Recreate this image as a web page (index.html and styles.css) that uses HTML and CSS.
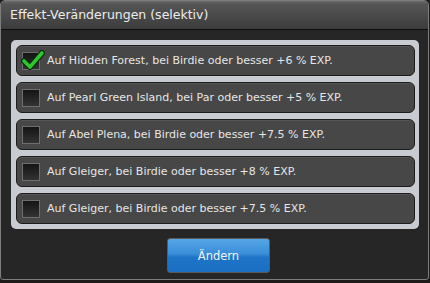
FILE: index.html
```html
<!DOCTYPE html>
<html>
<head>
<meta charset="utf-8">
<link rel="stylesheet" href="styles.css">
</head>
<body>
<div class="dialog">
  <div class="titlebar">Effekt-Veränderungen (selektiv)</div>
  <div class="content">
    <div class="panel">
      <div class="row">
        <span class="box checked">
          <svg class="check" width="24" height="24" viewBox="0 0 24 24">
            <path d="M3 13 L9 19 L21 5" fill="none" stroke="#0b2a0b" stroke-width="6" stroke-linecap="round" stroke-linejoin="round"/>
            <path d="M3 13 L9 19 L21 5" fill="none" stroke="#2fc52f" stroke-width="3.6" stroke-linecap="round" stroke-linejoin="round"/>
          </svg>
        </span>
        <span class="label">Auf Hidden Forest, bei Birdie oder besser +6 % EXP.</span>
      </div>
      <div class="row">
        <span class="box"></span>
        <span class="label">Auf Pearl Green Island, bei Par oder besser +5 % EXP.</span>
      </div>
      <div class="row">
        <span class="box"></span>
        <span class="label">Auf Abel Plena, bei Birdie oder besser +7.5 % EXP.</span>
      </div>
      <div class="row">
        <span class="box"></span>
        <span class="label">Auf Gleiger, bei Birdie oder besser +8 % EXP.</span>
      </div>
      <div class="row">
        <span class="box"></span>
        <span class="label">Auf Gleiger, bei Birdie oder besser +7.5 % EXP.</span>
      </div>
    </div>
    <div class="actions">
      <button class="btn">Ändern</button>
    </div>
  </div>
</div>
</body>
</html>
```
FILE: styles.css
```css
html, body {
  margin: 0;
  padding: 0;
  background: #1e1b1a;
  width: 430px;
  height: 283px;
  overflow: hidden;
}
.dialog {
  box-sizing: border-box;
  width: 429px;
  height: 280px;
  border: 1px solid #7d7d7d;
  border-radius: 5px 5px 3px 3px;
  background: #262626;
  font-family: "DejaVu Sans", sans-serif;
  display: flex;
  flex-direction: column;
  overflow: hidden;
}
.titlebar {
  height: 28px;
  border-bottom: 1px solid #0e0e0e;
  background: linear-gradient(#6c6c6c 0px, #555 3px, #4a4a4a 14px, #3c3c3c 28px);
  color: #ececec;
  font-size: 12.5px;
  line-height: 28px;
  padding-left: 9px;
}
.content {
  display: flex;
  flex-direction: column;
  padding: 10px 0 0 10px;
}
.panel {
  box-sizing: border-box;
  width: 408px;
  background: #c8ccd2;
  border-radius: 5px;
  padding: 5px 4px 5px 5px;
  display: flex;
  flex-direction: column;
  gap: 6px;
}
.row {
  box-sizing: border-box;
  height: 31px;
  background: #474747;
  border: 1px solid #1c1c1c;
  border-radius: 6px;
  display: flex;
  align-items: center;
  padding-left: 5px;
  box-shadow: inset 0 1px 0 #555;
}
.box {
  position: relative;
  box-sizing: border-box;
  width: 18px;
  height: 18px;
  border: 1px solid #6e6e6e;
  background: linear-gradient(#141414, #333);
  flex: none;
}
.check {
  position: absolute;
  left: -2px;
  top: -5px;
}
.label {
  color: #e6e6e6;
  font-size: 11px;
  margin-left: 7px;
  white-space: nowrap;
}
.actions {
  display: flex;
  padding-top: 9px;
  padding-left: 156px;
}
.btn {
  box-sizing: border-box;
  width: 103px;
  height: 35px;
  border: 1px solid #5a5a5a;
  border-radius: 3px;
  background: linear-gradient(#55a6e6 0%, #3a8ed8 45%, #1f74c8 55%, #1b6fc2 100%);
  color: #f2f6fa;
  font-family: "DejaVu Sans", sans-serif;
  font-size: 11.5px;
  padding: 0;
}
```
